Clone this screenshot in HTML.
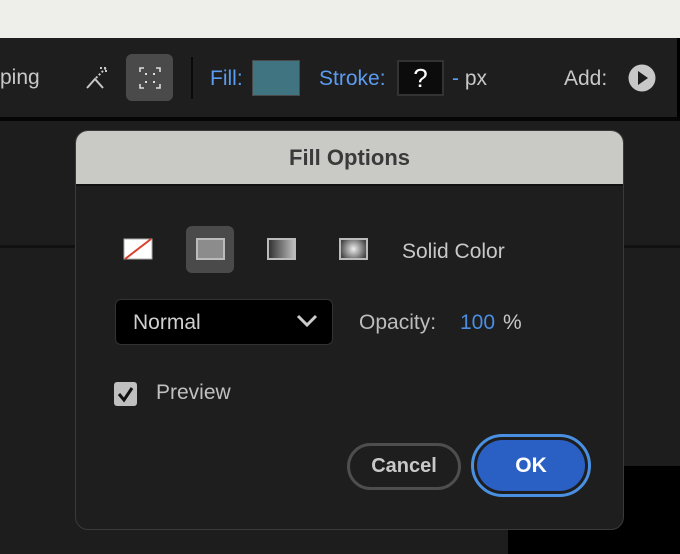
<!DOCTYPE html><html><head><style>
*{margin:0;padding:0;box-sizing:border-box}
body{width:680px;height:554px;background:#1d1d1d;position:relative;overflow:hidden;font-family:"Liberation Sans",sans-serif}
.a{position:absolute}
.t{color:#c8c8c8;font-size:21px;line-height:1}
.b{color:#5b9bf0;font-size:21px;line-height:1}
</style></head><body>
<div class="a" style="left:0;top:0;width:680px;height:38px;background:#eeeeea"></div>
<div class="a" style="left:0;top:38px;width:680px;height:80px;background:#1e1e1e"></div>
<div class="a" style="left:0;top:117px;width:680px;height:4px;background:#050505"></div>
<div class="a" style="left:677px;top:38px;width:3px;height:80px;background:#000"></div>
<div class="a" style="left:0;top:245px;width:680px;height:3px;background:#111"></div>
<div class="a" style="left:508px;top:466px;width:172px;height:88px;background:#000"></div>
<div class="a t" style="left:0;top:67px">ping</div>
<svg class="a" style="left:84px;top:64px" width="26" height="28" viewBox="0 0 26 28"><path d="M3 24 L11 15 L19 24" fill="none" stroke="#c8c8c8" stroke-width="2"/><path d="M12 14 L22 4 M16 4 H22 V10" fill="none" stroke="#c8c8c8" stroke-width="2" stroke-dasharray="2 2"/></svg>
<div class="a" style="left:126px;top:54px;width:47px;height:47px;background:#4a4a4a;border-radius:6px"></div>
<svg class="a" style="left:138px;top:66px" width="24" height="24" viewBox="0 0 24 24"><path d="M2 6V2H6M18 2H22V6M22 18V22H18M6 22H2V18" fill="none" stroke="#ddd" stroke-width="1.6"/><rect x="7" y="7" width="2" height="2" fill="#ddd"/><rect x="15" y="7" width="2" height="2" fill="#ddd"/><rect x="7" y="15" width="2" height="2" fill="#ddd"/><rect x="15" y="15" width="2" height="2" fill="#ddd"/></svg>
<div class="a" style="left:191px;top:57px;width:2px;height:42px;background:#0a0a0a"></div>
<div class="a b" style="left:210px;top:68px">Fill:</div>
<div class="a" style="left:252px;top:60px;width:48px;height:36px;background:#3f7480;border:1px solid #4a4a4a"></div>
<div class="a b" style="left:319px;top:68px">Stroke:</div>
<div class="a" style="left:397px;top:60px;width:47px;height:36px;background:#0c0c0c;border:2px solid #333;color:#fff;font-size:26px;text-align:center;line-height:32px">?</div>
<div class="a" style="left:452px;top:68px;font-size:21px;line-height:1"><span style="color:#5b9bf0">-</span> <span style="color:#c8c8c8">px</span></div>
<div class="a t" style="left:564px;top:68px">Add:</div>
<svg class="a" style="left:628px;top:64px" width="28" height="28"><circle cx="14" cy="14" r="13.5" fill="#c8c8c8"/><path d="M10 7 L20 14 L10 21Z" fill="#1e1e1e"/></svg>

<div class="a" style="left:75px;top:130px;width:549px;height:400px;background:#1e1e1e;border:1px solid #3a3a3a;border-radius:13px;overflow:hidden">
<div style="height:55px;background:#c9c9c5;border-bottom:2px solid #111;text-align:center;color:#3a3a3a;font-weight:bold;font-size:22px;line-height:54px">Fill Options</div>
</div>
<svg class="a" style="left:123px;top:238px" width="30" height="22"><rect x="1" y="1" width="28" height="20" fill="#fff" stroke="#aaa"/><path d="M2 21L28 1" stroke="#d9412e" stroke-width="2"/></svg>
<div class="a" style="left:186px;top:226px;width:48px;height:47px;background:#4a4a4a;border-radius:6px"></div>
<div class="a" style="left:196px;top:238px;width:29px;height:22px;background:#8c8c8c;border:2px solid #bbb"></div>
<div class="a" style="left:267px;top:238px;width:29px;height:22px;background:linear-gradient(90deg,#333,#bbb);border:2px solid #bbb"></div>
<div class="a" style="left:339px;top:238px;width:29px;height:22px;background:radial-gradient(circle,#eee,#444 90%);border:2px solid #bbb"></div>
<div class="a t" style="left:402px;top:241px;font-size:21px">Solid Color</div>
<div class="a" style="left:115px;top:299px;width:218px;height:46px;background:#000;border:1px solid #333;border-radius:6px"></div>
<div class="a t" style="left:133px;top:312px;font-size:21px;color:#d0d0d0">Normal</div>
<svg class="a" style="left:296px;top:314px" width="22" height="14"><path d="M2 2L11 11L20 2" fill="none" stroke="#ccc" stroke-width="3"/></svg>
<div class="a t" style="left:359px;top:312px;font-size:21px;color:#bdbdbd">Opacity:</div>
<div class="a" style="left:460px;top:312px;font-size:21px;line-height:1;color:#4b8de0">100</div>
<div class="a t" style="left:503px;top:312px;font-size:21px">%</div>
<div class="a" style="left:114px;top:382px;width:23px;height:24px;background:#c0c0c0;border-radius:3px"></div>
<svg class="a" style="left:114px;top:382px" width="23" height="24"><path d="M5 12L10 18L18 6" fill="none" stroke="#111" stroke-width="3"/></svg>
<div class="a t" style="left:156px;top:382px;font-size:21px;color:#c0c0c0">Preview</div>
<div class="a" style="left:347px;top:443px;width:114px;height:47px;border:3px solid #4e4e4e;border-radius:24px;color:#c8c8c8;font-weight:bold;font-size:20px;text-align:center;line-height:41px">Cancel</div>
<div class="a" style="left:471px;top:434px;width:120px;height:63px;border:3px solid #4a90e2;border-radius:32px;padding:3px"><div style="width:100%;height:100%;background:#2a5fc4;border-radius:26px;color:#fff;font-weight:bold;font-size:21px;text-align:center;line-height:51px">OK</div></div>
</body></html>
